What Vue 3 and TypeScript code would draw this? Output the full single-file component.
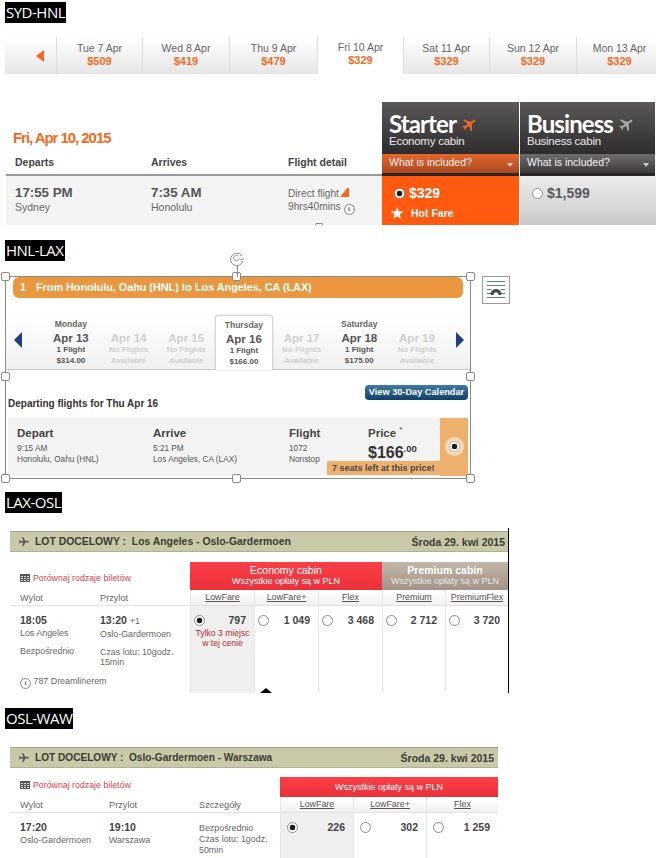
<script setup lang="ts">
interface DayTab { label: string; price: string; active?: boolean }
interface CalDay { top?: string; date: string; l1: string; l2: string; on: boolean; active?: boolean }
interface Fare { name: string; value: string; selected?: boolean }

const dayTabs: DayTab[] = [
  { label: 'Tue 7 Apr', price: '$509' },
  { label: 'Wed 8 Apr', price: '$419' },
  { label: 'Thu 9 Apr', price: '$479' },
  { label: 'Fri 10 Apr', price: '$329', active: true },
  { label: 'Sat 11 Apr', price: '$329' },
  { label: 'Sun 12 Apr', price: '$329' },
  { label: 'Mon 13 Apr', price: '$329' },
]
const calDays: CalDay[] = [
  { top: 'Monday', date: 'Apr 13', l1: '1 Flight', l2: '$314.00', on: true },
  { date: 'Apr 14', l1: 'No Flights', l2: 'Available', on: false },
  { date: 'Apr 15', l1: 'No Flights', l2: 'Available', on: false },
  { top: 'Thursday', date: 'Apr 16', l1: '1 Flight', l2: '$166.00', on: true, active: true },
  { date: 'Apr 17', l1: 'No Flights', l2: 'Available', on: false },
  { top: 'Saturday', date: 'Apr 18', l1: '1 Flight', l2: '$175.00', on: true },
  { date: 'Apr 19', l1: 'No Flights', l2: 'Available', on: false },
]
const handles = ['tl', 'tc', 'tr', 'ml', 'mr', 'bl', 'bc', 'br']
const osloFares: Fare[] = [
  { name: 'LowFare', value: '797', selected: true },
  { name: 'LowFare+', value: '1 049' },
  { name: 'Flex', value: '3 468' },
  { name: 'Premium', value: '2 712' },
  { name: 'PremiumFlex', value: '3 720' },
]
const wawFares: Fare[] = [
  { name: 'LowFare', value: '226', selected: true },
  { name: 'LowFare+', value: '302' },
  { name: 'Flex', value: '1 259' },
]
const planePath =
  'M21 16v-2l-8-5V3.5c0-.83-.67-1.5-1.5-1.5S10 2.67 10 3.5V9l-8 5v2l8-2.5V19l-2 1.5V22l3.5-1 3.5 1v-1.5L13 19v-5.5l8 2.5z'
</script>

<template>
  <div class="page">
    <!-- SYD-HNL -->
    <section class="s1">
      <div class="tag">SYD-HNL</div>
      <div class="strip">
        <div class="strip-prev"><span class="tri-left"></span></div>
        <div v-for="d in dayTabs" :key="d.label" class="strip-day" :class="{ active: d.active }">
          <span class="strip-label">{{ d.label }}</span>
          <span class="strip-price">{{ d.price }}</span>
        </div>
      </div>

      <div class="fares">
        <div class="fares-left">
          <div class="fri">Fri, Apr 10, 2015</div>
          <div class="cols3 heads">
            <span>Departs</span><span>Arrives</span><span>Flight detail</span>
          </div>
        </div>
        <div class="cabin">
          <div class="cabin-top">
            <div class="cabin-name"><span>Starter</span>
              <svg class="cabin-plane" viewBox="0 0 24 24"><path fill="#f26a21" :d="planePath" transform="rotate(55 12 12)" /></svg>
            </div>
            <div class="cabin-sub">Economy cabin</div>
          </div>
          <div class="included orange">What is included?<span class="tri-down"></span></div>
        </div>
        <div class="cabin">
          <div class="cabin-top">
            <div class="cabin-name"><span>Business</span>
              <svg class="cabin-plane" viewBox="0 0 24 24"><path fill="#a9a9a9" :d="planePath" transform="rotate(55 12 12)" /></svg>
            </div>
            <div class="cabin-sub">Business cabin</div>
          </div>
          <div class="included grey">What is included?<span class="tri-down"></span></div>
        </div>

        <div class="cols3 row-info">
          <div>
            <div class="big-time">17:55 PM</div>
            <div class="city">Sydney</div>
          </div>
          <div>
            <div class="big-time">7:35 AM</div>
            <div class="city">Honolulu</div>
          </div>
          <div class="detail">
            <div>Direct flight<svg class="tail" viewBox="0 0 10 10"><path fill="#f26a21" d="M0 10 8 0h2v10z" /></svg></div>
            <div>9hrs40mins <span class="info">i</span></div>
          </div>
          <span class="peek"></span>
        </div>
        <div class="price-cell starter">
          <div class="price-line">
            <span class="radio on"></span><b>$329</b>
          </div>
          <div class="hot"><span class="star">★</span>Hot Fare</div>
        </div>
        <div class="price-cell business">
          <div class="price-line">
            <span class="radio"></span><b>$1,599</b>
          </div>
        </div>
      </div>
    </section>

    <!-- HNL-LAX -->
    <section class="s2">
      <div class="tag">HNL-LAX</div>
      <div class="selection-row">
        <div class="selection">
          <div class="route"><span class="route-no">1</span>From Honolulu, Oahu (HNL) to Los Angeles, CA (LAX)</div>
          <div class="cal">
            <div class="cal-arrow left"></div>
            <div v-for="c in calDays" :key="c.date" class="cal-day" :class="{ off: !c.on, active: c.active }">
              <div class="cal-top">{{ c.top }}</div>
              <div class="cal-date">{{ c.date }}</div>
              <div class="cal-l">{{ c.l1 }}</div>
              <div class="cal-l">{{ c.l2 }}</div>
            </div>
            <div class="cal-arrow right"></div>
          </div>
          <div class="dep-head">
            <span class="dep-title">Departing flights for Thu Apr 16</span>
            <span class="cal-btn">View 30-Day Calendar</span>
          </div>
          <div class="flight">
            <div class="f-col">
              <div class="f-h">Depart</div>
              <div class="f-t">9:15 AM</div>
              <div class="f-t">Honolulu, Oahu (HNL)</div>
            </div>
            <div class="f-col">
              <div class="f-h">Arrive</div>
              <div class="f-t">5:21 PM</div>
              <div class="f-t">Los Angeles, CA (LAX)</div>
            </div>
            <div class="f-col">
              <div class="f-h">Flight</div>
              <div class="f-t">1072</div>
              <div class="f-t">Nonstop</div>
            </div>
            <div class="f-col">
              <div class="f-h">Price <sup class="f-star">*</sup></div>
              <div class="f-price">$166<sup>.00</sup></div>
            </div>
            <div class="f-pick"><span class="radio on halo"></span></div>
            <div class="seats">7 seats left at this price!</div>
          </div>
          <span v-for="h in handles" :key="h" class="handle" :class="h"></span>
          <span class="rot-line"></span>
          <svg class="rot" viewBox="0 0 18 18">
            <path fill="none" stroke="#8a8a8a" stroke-width="1.1" d="M14.5 5.5A7 7 0 1 0 15.6 11" />
            <path fill="none" stroke="#8a8a8a" stroke-width="1" d="M11 9a3 3 0 1 1-.6-3" />
            <path fill="none" stroke="#8a8a8a" stroke-width="1" d="M16.5 8 14 10.5 11.5 8" />
          </svg>
        </div>
        <div class="layout-btn">
          <svg viewBox="0 0 26 26">
            <path stroke="#5b7fa8" stroke-width="1" d="M4 4.500h18M4 8.500h18M4 12.500h4.500M17.500 12.500H22M4 16.500h4.500M17.500 16.500H22M4 20.500h18" />
            <path fill="#4a4a4a" d="M7.500 18c0-8 11-8 11 0h-3c0-3.800-5-3.800-5 0z" />
          </svg>
        </div>
      </div>
    </section>

    <!-- LAX-OSL -->
    <section class="s3">
      <div class="tag">LAX-OSL</div>
      <div class="lot lot-osl">
        <div class="lot-bar">
          <span class="lot-title">
            <svg class="lot-plane" viewBox="0 0 24 24"><path fill="#555" :d="planePath" transform="rotate(90 12 12)" /></svg>
            <span class="lot-text">LOT DOCELOWY :&nbsp; Los Angeles - Oslo-Gardermoen</span>
          </span>
          <span>Środa 29. kwi 2015</span>
        </div>
        <div class="osl-grid">
          <div class="compare">
            <span class="grid-ico"></span>Porównaj rodzaje biletów
          </div>
          <div class="band red span3">
            <div class="band-big">Economy cabin</div>
            <div class="band-small">Wszystkie opłaty są w PLN</div>
          </div>
          <div class="band tan span2">
            <div class="band-big strong">Premium cabin</div>
            <div class="band-small">Wszystkie opłaty są w PLN</div>
          </div>

          <div class="left-heads osl-left">
            <span>Wylot</span><span>Przylot</span>
          </div>
          <div v-for="f in osloFares" :key="f.name" class="fare-name"><u>{{ f.name }}</u></div>

          <div class="osl-left left-body">
            <div>
              <div class="l-time">18:05</div>
              <div class="l-txt">Los Angeles</div>
              <div class="l-txt gap">Bezpośrednio</div>
            </div>
            <div>
              <div class="l-time">13:20 <span class="plus">+1</span></div>
              <div class="l-txt">Oslo-Gardermoen</div>
              <div class="l-txt gap">Czas lotu: 10godz.<br />15min</div>
            </div>
            <div class="dream"><span class="info">i</span> 787 Dreamlinerem</div>
          </div>
          <div v-for="f in osloFares" :key="f.value" class="fare-cell" :class="{ sel: f.selected }">
            <div class="fare-line">
              <span class="radio" :class="{ on: f.selected }"></span>
              <b>{{ f.value }}</b>
            </div>
            <div v-if="f.selected" class="few">Tylko 3 miejsc<br />w tej cenie</div>
          </div>
          <span class="pointer"></span>
        </div>
      </div>
    </section>

    <!-- OSL-WAW -->
    <section class="s4">
      <div class="tag">OSL-WAW</div>
      <div class="lot lot-waw">
        <div class="lot-bar">
          <span class="lot-title">
            <svg class="lot-plane" viewBox="0 0 24 24"><path fill="#555" :d="planePath" transform="rotate(90 12 12)" /></svg>
            <span class="lot-text">LOT DOCELOWY :&nbsp; Oslo-Gardermoen - Warszawa</span>
          </span>
          <span>Środa 29. kwi 2015</span>
        </div>
        <div class="waw-grid">
          <div class="compare">
            <span class="grid-ico"></span>Porównaj rodzaje biletów
          </div>
          <div class="band red span3 single">Wszystkie opłaty są w PLN</div>

          <div class="left-heads waw-left">
            <span>Wylot</span><span>Przylot</span><span>Szczegóły</span>
          </div>
          <div v-for="f in wawFares" :key="f.name" class="fare-name"><u>{{ f.name }}</u></div>

          <div class="waw-left left-body">
            <div>
              <div class="l-time">17:20</div>
              <div class="l-txt">Oslo-Gardermoen</div>
            </div>
            <div>
              <div class="l-time">19:10</div>
              <div class="l-txt">Warszawa</div>
            </div>
            <div class="waw-detail">
              Bezpośrednio<br />Czas lotu: 1godz.<br />50min
            </div>
          </div>
          <div v-for="f in wawFares" :key="f.value" class="fare-cell" :class="{ sel: f.selected }">
            <div class="fare-line">
              <span class="radio" :class="{ on: f.selected }"></span>
              <b>{{ f.value }}</b>
            </div>
          </div>
        </div>
      </div>
    </section>
  </div>
</template>

<style scoped>
.page {
  width: 656px;
  height: 858px;
  overflow: hidden;
  background: #fff;
  font-family: "Liberation Sans", Arial, sans-serif;
  color: #555;
}
.tag {
  width: fit-content;
  height: 21px;
  margin-left: 5px;
  padding: 0 1px;
  background: #000;
  color: #fff;
  font: 15px/21px "Open Sans", sans-serif;
  letter-spacing: -0.5px;
}

/* SYD-HNL */
.s1 { padding-top: 2px; height: 238px; box-sizing: border-box; }
.strip {
  display: grid;
  grid-template-columns: 52px 86px 87px 88px 86px 86px 87px 86px;
  width: 651px;
  height: 37px;
  margin: 14px 0 0 5px;
  overflow: hidden;
  background: linear-gradient(#fff, #e6e6e6);
}
.strip-prev { display: flex; align-items: center; justify-content: flex-end; padding-right: 12px; border-right: 1px solid #ddd; }
.tri-left { border-style: solid; border-width: 6px 8px 6px 0; border-color: transparent #f26a21 transparent transparent; }
.strip-day {
  display: flex;
  flex-direction: column;
  align-items: center;
  padding-top: 5px;
  border-right: 1px solid #ddd;
  text-align: center;
}
.strip-day.active { background: #fff; padding-top: 4px; }
.strip-label { font-size: 10.5px; line-height: 13px; color: #666; }
.strip-price { font-size: 11px; line-height: 12px; font-weight: 700; color: #f26a21; }

.fares {
  display: grid;
  grid-template-columns: 376px 138px 136px;
  grid-template-rows: 74px 49px;
  margin: 28px 0 0 6px;
}
.fares-left { display: flex; flex-direction: column; justify-content: flex-end; border-bottom: 2px solid #999; box-sizing: border-box; }
.fri {
  margin: 0 0 9px 7px;
  font-size: 15px;
  line-height: 18px;
  font-weight: 700;
  letter-spacing: -1.05px;
  color: #f26a21;
}
.cols3 { position: relative; display: grid; grid-template-columns: 136px 137px 94px; padding-left: 9px; box-sizing: border-box; width: 376px; }
.heads { font-size: 10.5px; line-height: 12px; font-weight: 700; color: #444; padding-bottom: 6px; }
.cabin { margin-right: 1px; overflow: hidden; }
.cabin:last-of-type { margin-right: 0; }
.cabin-top {
  height: 52px;
  padding: 11px 0 0 7px;
  box-sizing: border-box;
  background: linear-gradient(#5a5859, #2f2c2d);
  color: #fff;
}
.cabin-name {
  display: flex;
  align-items: center;
  gap: 5px;
  height: 22px;
  font-family: Lato, sans-serif;
  font-size: 24px;
  line-height: 22px;
  font-weight: 700;
  letter-spacing: -0.9px;
}
.cabin-plane { width: 17px; height: 17px; }
.cabin-sub { font-size: 11.5px; line-height: 13px; letter-spacing: -0.25px; color: #e8e8e8; }
.included {
  position: relative;
  height: 22px;
  padding-left: 7px;
  box-sizing: border-box;
  font-size: 10.5px;
  line-height: 17px;
  color: #f0f0f0;
  border-bottom: 3px solid #2b2626;
}
.orange { background: linear-gradient(#e4662e, #a9491f); }
.grey { background: linear-gradient(#6e6c6c, #3c3a3a); }
.tri-down {
  position: absolute;
  right: 6px;
  top: 9px;
  border-style: solid;
  border-width: 4px 3.5px 0 3.5px;
  border-color: #c9c9c9 transparent transparent transparent;
}
.row-info { background: #f4f4f4; padding-top: 9px; }
.big-time { font-size: 13.3px; line-height: 16px; font-weight: 700; color: #555; }
.city { font-size: 10.5px; line-height: 13px; color: #666; }
.detail { font-size: 10.2px; line-height: 12.5px; color: #666; padding-top: 3px; }
.tail { width: 9px; height: 9px; margin-left: 1px; }
.info {
  display: inline-block;
  width: 9px;
  height: 9px;
  border: 1px solid #888;
  border-radius: 50%;
  font: 700 7px/9px "Liberation Serif", serif;
  text-align: center;
  color: #666;
  vertical-align: -1px;
}
.peek {
  position: absolute;
  left: 309px;
  bottom: 0;
  width: 8px;
  height: 2px;
  box-sizing: border-box;
  border: 1px solid #8a8a8a;
  border-bottom: 0;
  border-radius: 4px 4px 0 0;
}
.price-cell { margin-right: 1px; padding: 9px 0 0 12px; box-sizing: border-box; }
.price-cell.starter { background: #ff5a10; color: #fff; padding-left: 12px; }
.price-cell.business { background: linear-gradient(#ececec, #c9c9c9); color: #5a5a5a; margin-right: 0; padding-left: 12px; }
.price-line { display: flex; align-items: center; gap: 4px; height: 16px; font-size: 14px; }
.hot { display: flex; align-items: center; margin: 5px 0 0 -3px; font-size: 10.5px; font-weight: 700; color: #fff; line-height: 14px; }
.star { font-size: 14px; width: 20px; }

.radio {
  display: inline-block;
  flex: none;
  width: 11px;
  height: 11px;
  box-sizing: border-box;
  border: 1px solid #8d8d8d;
  border-radius: 50%;
  background: #fff;
}
.radio.on { background: radial-gradient(circle, #1b1b1b 0 2.6px, #fff 3.1px); }

/* HNL-LAX */
.s2 { padding-top: 2px; }
.selection-row { display: flex; align-items: flex-start; gap: 11px; margin: 15px 0 0 5px; }
.selection {
  position: relative;
  width: 466px;
  height: 203px;
  box-sizing: border-box;
  border: 1px solid #8a8a8a;
}
.route {
  height: 21px;
  margin: 0 7px 0 7px;
  padding-left: 7px;
  border-radius: 6px;
  background: #ea973f;
  color: #fff;
  font-size: 10.8px;
  line-height: 20px;
  font-weight: 700;
}
.route-no { margin-right: 10px; }
.cal {
  display: grid;
  grid-template-columns: 36px repeat(7, 57.7px) 1fr;
  height: 55px;
  margin-top: 17px;
  border-bottom: 1px solid #c4c4c4;
  box-sizing: border-box;
  background: linear-gradient(#fff, #f0f0f0);
}
.cal-arrow { align-self: center; width: 0; height: 0; border-style: solid; margin-top: -6px; }
.cal-arrow.left { justify-self: start; margin-left: 8px; border-width: 8px 8px 8px 0; border-color: transparent #1c3f86 transparent transparent; }
.cal-arrow.right { justify-self: end; margin-right: 6px; border-width: 8px 0 8px 8px; border-color: transparent transparent transparent #1c3f86; }
.cal-day { text-align: center; color: #555; padding-top: 4px; box-sizing: border-box; }
.cal-day.active {
  height: 55px;
  background: #fff;
  border: 1px solid #d4d4d4;
  border-bottom: 0;
  border-radius: 3px 3px 0 0;
  box-shadow: 0 0 3px #ddd;
  padding-top: 4px;
}
.cal-top { height: 11px; font-size: 8.5px; line-height: 11px; font-weight: 700; color: #666; }
.cal-date { font-size: 11.5px; line-height: 13px; font-weight: 700; color: #555; margin: 2px 0 -1px; }
.cal-l { font-size: 8px; line-height: 11px; font-weight: 700; color: #555; }
.off .cal-date, .off .cal-l { color: #d0d0d0; }
.dep-head {
  display: flex;
  justify-content: space-between;
  align-items: flex-end;
  height: 25px;
  margin: 15px 2px 8px 2px;
}
.dep-title { font-size: 10px; line-height: 12px; font-weight: 700; color: #333; }
.cal-btn {
  align-self: flex-start;
  width: 103px;
  height: 15px;
  border-radius: 4px;
  background: linear-gradient(#3e7aa6, #123f66);
  color: #fff;
  font-size: 9.2px;
  line-height: 14px;
  font-weight: 700;
  text-align: center;
}
.flight {
  position: relative;
  display: grid;
  grid-template-columns: 136px 136px 79px 72px 28px;
  height: 58px;
  margin: 0 2px;
  padding-left: 9px;
  background: #f3f3f3;
}
.f-col { padding-top: 9px; }
.f-h { font-size: 11.5px; line-height: 13px; font-weight: 700; color: #444; }
.f-star { font-size: 8px; font-weight: 400; line-height: 0; }
.f-t { font-size: 8.25px; line-height: 11px; color: #555; }
.f-h + .f-t { margin-top: 3px; }
.f-price { font-size: 16px; line-height: 19px; font-weight: 700; color: #333; margin-top: 3px; }
.f-price sup { font-size: 9.5px; line-height: 0; }
.f-pick {
  display: flex;
  justify-content: center;
  padding-top: 23px;
  background: #eeb06d;
  height: 58px;
  box-sizing: border-box;
}
.radio.halo { box-shadow: 0 0 0 4px #f4d9b6; border-color: #bbb; }
.seats {
  position: absolute;
  right: 28px;
  bottom: 1px;
  width: 113px;
  height: 14px;
  box-sizing: border-box;
  padding-left: 5px;
  background: #eeb06d;
  color: #4a4650;
  font-size: 9px;
  line-height: 14px;
  font-weight: 700;
  border-radius: 2px 0 0 0;
}
.handle {
  position: absolute;
  width: 7px;
  height: 7px;
  background: #fff;
  border: 1px solid #8a8a8a;
  border-radius: 2px;
}
.tl { left: -5px; top: -5px; }
.tc { left: 226px; top: -5px; }
.tr { right: -5px; top: -5px; }
.ml { left: -5px; top: 95px; }
.mr { right: -5px; top: 95px; }
.bl { left: -5px; bottom: -5px; }
.bc { left: 226px; bottom: -5px; }
.br { right: -5px; bottom: -5px; }
.rot-line { position: absolute; left: 231px; top: -12px; width: 1px; height: 12px; background: #8a8a8a; }
.rot { position: absolute; left: 223px; top: -26px; width: 16px; height: 16px; }
.layout-btn {
  width: 28px;
  height: 28px;
  box-sizing: border-box;
  border: 1px solid #9a9a9a;
  background: #fff;
}
.layout-btn svg { display: block; width: 26px; height: 26px; }

/* LOT tables */
.s3 { padding-top: 13px; }
.s4 { padding-top: 15px; }
.lot { margin-left: 10px; }
.lot-osl { width: 499px; margin-top: 15px; padding-top: 3px; box-sizing: border-box; border-right: 1px solid #000; height: 165px; overflow: hidden; }
.lot-waw { width: 488px; margin-top: 18px; }
.lot-bar {
  display: flex;
  justify-content: space-between;
  align-items: center;
  height: 21px;
  padding: 0 4px 0 8px;
  box-sizing: border-box;
  background: #c9c9aa;
  border-top: 1px solid #a6a68c;
  border-bottom: 1px solid #b0b095;
  font-size: 10.5px;
  font-weight: 700;
  color: #3c3c32;
}
.lot-osl .lot-bar { padding-right: 3px; }
.lot-title { display: flex; align-items: center; gap: 5px; }
.lot-osl .lot-text { font-size: 10.4px; }
.lot-waw .lot-text { font-size: 10.1px; }
.lot-plane { width: 12px; height: 12px; flex: none; }
.osl-grid {
  position: relative;
  display: grid;
  grid-template-columns: 180px 64px 64px 64px 63px 1fr;
  grid-template-rows: 28px 16px 87px;
  margin-top: 10px;
}
.waw-grid {
  display: grid;
  grid-template-columns: 270px 73px 73px 72px;
  grid-template-rows: 20px 16px 60px;
  margin-top: 9px;
}
.compare {
  display: flex;
  align-items: center;
  gap: 3px;
  padding: 4px 0 0 10px;
  font-size: 8.8px;
  color: #d9414a;
}
.waw-grid .compare { padding-top: 0; margin-top: -4px; }
.grid-ico {
  width: 10px;
  height: 8px;
  box-sizing: border-box;
  border: 1px solid #555;
  background:
    repeating-linear-gradient(90deg, transparent 0 2px, #555 2px 3px),
    repeating-linear-gradient(0deg, transparent 0 1px, #555 1px 2px);
  background-color: #ddd;
}
.span3 { grid-column: span 3; }
.span2 { grid-column: span 2; }
.band { text-align: center; color: #fff; padding-top: 2px; box-sizing: border-box; }
.red { background: linear-gradient(#fb3f48, #ea3039); }
.tan { background: linear-gradient(#c2b6a9, #a29488); }
.band-big { font-size: 10.5px; line-height: 12px; }
.band-big.strong { font-weight: 700; }
.band-small { font-size: 9px; line-height: 11px; }
.tan .band-small { color: #e9e3dc; }
.single { font-size: 9px; line-height: 17px; }
.left-heads {
  display: grid;
  align-items: center;
  font-size: 9.2px;
  color: #666;
  border-bottom: 1px solid #e2e2e2;
  padding-left: 10px;
}
.fare-name {
  font-size: 8.9px;
  line-height: 15px;
  text-align: center;
  color: #555;
  background: linear-gradient(#fff, #f1f1f1);
  border-left: 1px solid #e6e6e6;
  border-bottom: 1px solid #e2e2e2;
}
.osl-left { grid-template-columns: 80px 1fr; }
.waw-left { grid-template-columns: 89px 90px 1fr; }
.left-body {
  display: grid;
  align-content: start;
  padding: 7px 0 0 10px;
  color: #666;
}
.l-time { font-size: 10.5px; line-height: 14px; font-weight: 700; color: #444; }
.plus { font-size: 9px; font-weight: 400; color: #666; }
.l-txt { font-size: 8.9px; line-height: 10.5px; margin-top: 1px; color: #666; }
.l-txt.gap { margin-top: 7px; }
.dream { grid-column: 1 / -1; font-size: 8.9px; margin-top: 8px; color: #666; line-height: 11px; }
.waw-detail { font-size: 8.9px; line-height: 11px; padding-top: 3px; color: #666; }
.fare-cell { border-left: 1px solid #e6e6e6; padding: 7px 8px 0 3px; box-sizing: border-box; }
.fare-cell.sel { background: #efefef; }
.fare-line {
  display: flex;
  justify-content: space-between;
  align-items: center;
  height: 14px;
  font-size: 10.5px;
  color: #444;
}
.few { margin: 2px -8px 0 -3px; font-size: 8.6px; line-height: 9.5px; color: #b02a33; text-align: center; white-space: nowrap; }
.lot-waw .fare-cell { padding: 7px 8px 0 6px; }
.pointer {
  position: absolute;
  left: 250px;
  bottom: 0;
  border-style: solid;
  border-width: 0 6px 5px 6px;
  border-color: transparent transparent #000 transparent;
}
</style>
